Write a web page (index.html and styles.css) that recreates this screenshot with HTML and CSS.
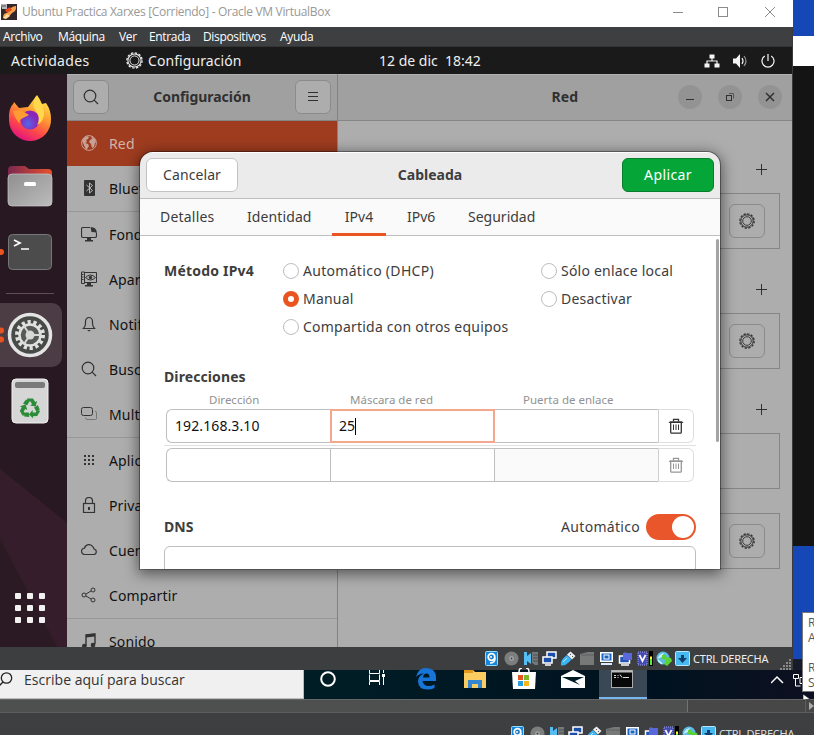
FILE: index.html
```html
<!DOCTYPE html>
<html lang="es">
<head>
<meta charset="utf-8">
<title>Ubuntu Practica Xarxes</title>
<link rel="stylesheet" href="styles.css">
</head>
<body>
<svg class="defs" width="0" height="0">
  <symbol id="gear" viewBox="0 0 16 16"><g fill="none" stroke="currentColor"><circle cx="8" cy="8" r="6.200" stroke-width="1"/><circle cx="8" cy="8" r="4.300" stroke-width=".9"/><circle cx="8" cy="8" r="7.200" stroke-width="1.200" stroke-dasharray="2.300 1.470"/></g></symbol>
  <symbol id="search" viewBox="0 0 16 16"><g fill="none" stroke="currentColor" stroke-width="1.2"><circle cx="7" cy="7" r="5.8"/><path d="M11.2 11.2L15 15"/></g></symbol>
  <symbol id="trash" viewBox="0 0 16 16"><path d="M2 3.200h12l1.500 1.800H.5z" fill="currentColor"/><path d="M5.500 3.200V1.300h5v1.900M2.700 5v9.200q0 1 1 1h8.600q1 0 1-1V5" fill="none" stroke="currentColor" stroke-width="1.300"/><path d="M5.500 6.500v5.500M8 6.500v5.500M10.500 6.500v5.500" stroke="currentColor"/></symbol>
  <symbol id="indicators" viewBox="0 0 205 16">
    <rect x="0.500" y="0.500" width="12" height="14" rx="1" fill="#1687db" stroke="#8fdcff"/><circle cx="6.500" cy="6" r="3.300" fill="#1b78c8" stroke="#fff" stroke-width="1.800"/><circle cx="6" cy="6" r="1" fill="#fff"/><path d="M10 7q0 5-5 5" fill="none" stroke="#fff" stroke-width="1.500"/>
    <circle cx="26.500" cy="7.500" r="7" fill="#7c7d7d"/><circle cx="26.500" cy="7.500" r="2.300" fill="#aaa"/><circle cx="26.500" cy="7.500" r="1" fill="#444"/>
    <path d="M39 1h3v4l4-3v11l-4-3v4h-3z" fill="#55bdf3"/><path d="M47 1h6v13h-3l-3-2z" fill="#747879"/><path d="M48 4h5M48 7h5M48 10h5" stroke="#4c5052"/>
    <g fill="#1d4daa" stroke="#fff" stroke-width="1.500"><rect x="62" y="1" width="9" height="6"/><rect x="58" y="6" width="9" height="6"/></g><path d="M60 14h6" stroke="#fff" stroke-width="1.500"/>
    <path d="M76 14.500q-.5-5 3-8l3-2.500 4.500 4.500-3 3q-3 3.500-7.500 3z" fill="#3ab4f4"/><path d="M82 3.500L85.500.5l5 4.500-3.500 3.500z" fill="#eee"/><path d="M85 3l1 1M87 5l1 1" stroke="#555"/><path d="M78 11l4-4" stroke="#bcecff"/>
    <path d="M95 3l8-2h6v13H95z" fill="#777878"/><path d="M96 4h13" stroke="#606161"/>
    <rect x="115" y="1" width="13" height="10" fill="#fff"/><rect x="116.500" y="2.500" width="10" height="7" fill="#1a64c2"/><rect x="119" y="4" width="5" height="4" fill="none" stroke="#fff"/><path d="M116 13h11" stroke="#d9eaff" stroke-width="2"/>
    <rect x="134.500" y="5" width="10" height="7" fill="#2355b7" stroke="#fff" stroke-width="1.500"/><path d="M138 2l3-1v1h6v7h-9z" fill="#5969d9"/><path d="M136 14h8" stroke="#fff" stroke-width="1.500"/>
    <rect x="153" y="1" width="9" height="13" fill="#434bb2" stroke="#9c9df0" stroke-dasharray="1 1"/><path d="M154.500 4l3 6 3-6" fill="none" stroke="#fff" stroke-width="1.700"/>
    <rect x="164" y="0" width="4" height="15" fill="#000"/><path d="M166 14V8" stroke="#51f12b" stroke-width="2"/><path d="M166 8V5.500" stroke="#ff3" stroke-width="2"/>
    <circle cx="178" cy="7" r="6.500" fill="#5bbce4"/><path d="M172 8q3-6 7-6l-2 4z" fill="#c5eefc"/><path d="M177 4q5-1 4 2l5 1 1 3-5 5-3-2 2-4-4-1z" fill="#5bd236"/><path d="M173 9l4 4" stroke="#d7f7ff" stroke-width="1.500"/>
    <rect x="190.500" y="0.500" width="14" height="14" rx="1" fill="#48b8f0" stroke="#b5e7ff"/><path d="M196 4h3v3h3l-4.500 5L193 7h3z" fill="#103e68"/>
  </symbol>
</svg>

<div class="screen">
  <div class="upper">
    <section class="vm">
      <header class="titlebar">
        <svg width="16" height="16" viewBox="0 0 16 16"><rect width="16" height="16" fill="#35262a"/><path d="M2 14q0-5 4-5 4-7 9-7 1 5-4 7-5 7-9 5z" fill="#f4a24e"/><path d="M4 6l5-3 2 3-5 3z" fill="#e6471c"/><path d="M6 10l3 2-4 3-3-1z" fill="#ffd99b"/><path d="M0 0h6v5H1z" fill="#bbb8bd"/><path d="M1 2h4" stroke="#555"/></svg>
        <span class="win-title">Ubuntu Practica Xarxes [Corriendo] - Oracle VM VirtualBox</span>
        <svg class="win-buttons" width="104" height="12" viewBox="0 0 104 12" fill="none" stroke="#8b8b8b"><path d="M1 6.500h10M93 1l10 10M103 1L93 11"/><rect x="46.500" y="1.500" width="9" height="9"/></svg>
      </header>
      <nav class="menubar"><span class="m1">Archivo</span><span class="m2">Máquina</span><span class="m3">Ver</span><span class="m4">Entrada</span><span class="m5">Dispositivos</span><span class="m6">Ayuda</span></nav>
      <div class="panel">
        <span class="activities">Actividades</span>
        <svg class="panel-gear" width="17" height="17"><use href="#gear"/></svg><span class="appname">Configuración</span>
        <span class="clock">12 de dic&nbsp; 18:42</span>
        <svg class="tray" width="72" height="16" viewBox="0 0 72 16"><g fill="#f4f4f4"><rect x="5.500" y="1.500" width="5" height="4"/><rect x="0.500" y="10.500" width="5" height="4"/><rect x="10.500" y="10.500" width="5" height="4"/><path d="M29 5.500h3L36 1v14l-4-4.500h-3z"/></g><g fill="none" stroke="#f4f4f4" stroke-width="1.200"><path d="M8 5v3M3 11V8h10v3M38 5q2 3 0 6"/><path d="M40 3q4 5 0 10" stroke="#999"/><path d="M60.800 3a6 6 0 1 0 6.400 0M64 1v7"/></g></svg>
      </div>

      <div class="desktop">
        <aside class="dock">
          <svg class="dock-art" width="67" height="573" viewBox="0 0 67 573">
            <defs>
              <linearGradient id="ff" x1="0.800" y1="0" x2="0.300" y2="1"><stop offset="0" stop-color="#fff04c"/><stop offset=".4" stop-color="#ff9b32"/><stop offset=".7" stop-color="#ff4a48"/><stop offset="1" stop-color="#e01083"/></linearGradient>
              <linearGradient id="fold" x1="0" y1="0" x2="1" y2="0"><stop offset="0" stop-color="#7b2850"/><stop offset="1" stop-color="#e8522c"/></linearGradient>
              <linearGradient id="grey" x1="0" y1="0" x2="1" y2="1"><stop offset="0" stop-color="#8f8f8f"/><stop offset="1" stop-color="#bcbcbc"/></linearGradient>
              <radialGradient id="globe" cx=".4" cy=".7"><stop offset="0" stop-color="#5568e8"/><stop offset="1" stop-color="#8a25ba"/></radialGradient>
              <path id="arrow" d="M27 324.500h6l2.200 3.500 1.800-1-1.300 5.500-5.700-1 2-1.300-1.500-2.700h-3zM26 325.500l3.500 2-2.500 4-4-2z"/>
            </defs>
            <path d="M0 395L67 449V573H0z" fill="#37202e" opacity=".7"/><path d="M0 465l57 108H0z" fill="#291a23" opacity=".8"/><path d="M15 490L0 455V395l67 54v140z" fill="#3d2030" opacity=".35"/>
            <g transform="translate(0 4)"><path d="M11 33l3-8 5 6 9-1 9-12q3 4 5 9l4-1q5 7 5 16a21 21 0 0 1-42 2q-1-13 5-18z" transform="translate(0 -1)" fill="url(#ff)"/><circle cx="30" cy="42" r="9.500" fill="url(#globe)"/><path d="M13 33l8-1 8 5-6 3q-5 2-3 6-5-5-7-13z" fill="#ff9c31"/><path d="M36 18q-5 10 0 15 5 7 1 14 6-3 7-10 1-9-8-19z" fill="#ffd84b"/></g>
            <path d="M8 96q0-4 4-4h13l4 3h19q4 0 4 4v12H8z" fill="url(#fold)"/><rect x="8" y="100" width="44" height="32" rx="4" fill="url(#grey)" stroke="#c9c9c9" stroke-width=".7"/><rect x="24" y="108" width="12" height="4" rx="1.500" fill="#fff"/>
            <rect x="8.500" y="160.500" width="43" height="35" rx="4" fill="#4b4c4b" stroke="#777"/><path d="M14 166l6 3-6 3M21 175h8" fill="none" stroke="#fff" stroke-width="1.700"/>
            <circle cx="1" cy="178" r="3" fill="#e95420"/><path d="M6 219.500h48" stroke="#604f59"/>
            <rect x="-10" y="229" width="72" height="64" rx="10" fill="#4c3d45"/><circle cx="1" cy="256.500" r="3" fill="#e95420"/><circle cx="1" cy="265.500" r="3" fill="#e95420"/>
            <circle cx="30" cy="261" r="20.500" fill="#484a48" stroke="#e4e4e4" stroke-width="3.500"/><circle cx="30" cy="261" r="13" fill="none" stroke="#e0e0e0" stroke-width="4" stroke-dasharray="3.200 2.640"/><circle cx="30" cy="261" r="10.500" fill="#575957" stroke="#e0e0e0" stroke-width="2.500"/><circle cx="30" cy="261" r="4.500" fill="#d7d7d7"/><path d="M30 261h11M30 261l-6-9M30 261l-6 9" stroke="#d7d7d7" stroke-width="2"/>
            <rect x="12" y="305" width="36" height="44" rx="4" fill="#d6d6d6" stroke="#f2f2f2"/><rect x="15" y="308" width="30" height="6" rx="2" fill="#7a7a7a"/>
            <g fill="#2c8b36"><use href="#arrow"/><use href="#arrow" transform="rotate(120 30 334.500)"/><use href="#arrow" transform="rotate(240 30 334.500)"/></g>
            <g fill="#f2f2f2"><rect x="15" y="519" width="6" height="6" rx="1"/><rect x="27" y="519" width="6" height="6" rx="1"/><rect x="39" y="519" width="6" height="6" rx="1"/><rect x="15" y="531" width="6" height="6" rx="1"/><rect x="27" y="531" width="6" height="6" rx="1"/><rect x="39" y="531" width="6" height="6" rx="1"/><rect x="15" y="543" width="6" height="6" rx="1"/><rect x="27" y="543" width="6" height="6" rx="1"/><rect x="39" y="543" width="6" height="6" rx="1"/></g>
          </svg>
        </aside>

        <div class="sidebar">
          <div class="side-head"><span class="tool"><svg width="16" height="16"><use href="#search"/></svg></span><b class="h-conf">Configuración</b><span class="tool"><svg width="16" height="16" viewBox="0 0 16 16"><path d="M3 3.500h10M3 7.500h10M3 11.500h10" stroke="#303030"/></svg></span></div>
          <div class="row selected"><svg width="16" height="16" viewBox="0 0 16 16"><circle cx="8" cy="8" r="7.400" fill="none" stroke="#c9a093"/><path d="M1 6l2-3 3-2 2 1-1 2-2 1 1 2-2 1 3 1 1 2-2 3-1 1-2-5zM10 1l4 3 1 3-1 1-1 4-2 1-1-4-2-2 1-2 2-1z" fill="#c9a093"/></svg><span>Red</span></div>
          <div class="row line"><svg width="16" height="16" viewBox="0 0 16 16"><rect x="3" width="11" height="16" rx="1" fill="#333"/><path d="M5.500 5l6 5.500-3 2.500V3l3 2.500-6 5.500" fill="none" stroke="#bbb"/></svg><span>Bluetooth</span></div>
          <div class="row"><svg width="16" height="16" viewBox="0 0 16 16"><path d="M9 1.500H2q-1.500 0-1.500 1.500v7q0 1.500 1.500 1.500h12q1.500 0 1.500-1.500V7" fill="none" stroke="#333" stroke-width="1.200"/><path d="M9.500 1q6 0 6.500 6-2-1-5.500-1zM6 12h4v2h2v1.500H4V14h2z" fill="#333"/></svg><span>Fondo</span></div>
          <div class="row"><svg width="16" height="16" viewBox="0 0 16 16"><path d="M4 1.500h11.500v10H4M.5 1v11.500h3V1zM.5 3.500h2M.5 6h2M.5 8.500h2" fill="none" stroke="#333"/><path d="M4.500 6.500q5-5 10 0-5 5-10 0z" fill="none" stroke="#333"/><circle cx="9.500" cy="6.500" r="1.700" fill="#333"/><path d="M6 12h4v2h2v1.500H4V14h2z" fill="#333"/></svg><span>Apariencia</span></div>
          <div class="row"><svg width="16" height="16" viewBox="0 0 16 16"><path d="M2.500 12.500q2-2 2-5v-2a3.500 4 0 0 1 7 0v2q0 3 2 5z" fill="none" stroke="#333" stroke-width="1.200"/><path d="M6 14h4l-2 1.500z" fill="#333"/></svg><span>Notificaciones</span></div>
          <div class="row"><svg width="16" height="16"><use href="#search"/></svg><span>Buscar</span></div>
          <div class="row line"><svg width="16" height="16" viewBox="0 0 16 16" fill="none" stroke="#333"><rect x=".5" y="1.500" width="11" height="8" rx="2"/><path d="M14 5.500h1q.5 0 .5 1v6q0 1-1 1H6q-1.500 0-1.500-2" stroke="#777"/></svg><span>Multitarea</span></div>
          <div class="row"><svg width="16" height="16" viewBox="0 0 16 16" stroke="#333" stroke-width="2" stroke-dasharray="2 2"><path d="M3 4h10M3 8h10M3 12h10"/></svg><span>Aplicaciones</span></div>
          <div class="row"><svg width="16" height="16" viewBox="0 0 16 16" fill="none" stroke="#333" stroke-width="1.200"><rect x="2.500" y="6.500" width="11" height="9"/><path d="M4.500 6V4a3.500 3.500 0 0 1 7 0v2"/><path d="M8 10v3" stroke-width="2"/></svg><span>Privacidad</span></div>
          <div class="row"><svg width="16" height="16" viewBox="0 0 16 16"><path d="M4 12.500a3.200 3.200 0 0 1-.5-6.400A4.600 4.600 0 0 1 12 5q1 1 1 2a2.800 2.800 0 0 1 0 5.500z" fill="none" stroke="#333" stroke-width="1.200"/></svg><span>Cuentas en línea</span></div>
          <div class="row line"><svg width="16" height="16" viewBox="0 0 16 16" fill="none" stroke="#333"><circle cx="3" cy="8" r="2"/><circle cx="12" cy="3" r="2"/><circle cx="12" cy="13" r="2"/><path d="M5 7l5-3M5 9l5 3"/></svg><span>Compartir</span></div>
          <div class="row"><svg width="16" height="16" viewBox="0 0 16 16"><path d="M5 13V2l9-1v10" fill="none" stroke="#333" stroke-width="1.400"/><path d="M5 1.500l9-1v3l-9 1z" fill="#333"/><circle cx="3.300" cy="13" r="2.300" fill="#333"/><circle cx="12" cy="12" r="2.300" fill="#333"/></svg><span>Sonido</span></div>
        </div>

        <main class="network">
          <div class="net-head"><b class="h-red">Red</b><div class="round-buttons"><i><svg width="24" height="24" viewBox="0 0 24 24"><path d="M8 14.500h8" stroke="#303030"/></svg></i><i><svg width="24" height="24" viewBox="0 0 24 24" fill="none" stroke="#303030"><rect x="8.500" y="10.500" width="5" height="5"/><path d="M11 8.500h4.500v5" stroke="#555"/></svg></i><i><svg width="24" height="24" viewBox="0 0 24 24"><path d="M8 8l8 8M16 8l-8 8" stroke="#303030" stroke-width="1.500"/></svg></i></div></div>
          <div class="cards">
            <div class="plus"></div>
            <div class="card"><span class="tool"><svg width="16" height="16"><use href="#gear"/></svg></span></div>
            <div class="plus"></div>
            <div class="card"><span class="tool"><svg width="16" height="16"><use href="#gear"/></svg></span></div>
            <div class="plus"></div>
            <div class="card"></div>
            <div class="card last"><span class="tool"><svg width="16" height="16"><use href="#gear"/></svg></span></div>
          </div>
        </main>

        <div class="dialog">
          <div class="dlg-head"><button class="cancel"><span>Cancelar</span></button><b>Cableada</b><button class="apply"><span>Aplicar</span></button></div>
          <div class="tabs"><span class="t1">Detalles</span><span class="t2">Identidad</span><span class="t3 on">IPv4</span><span class="t4">IPv6</span><span class="t5">Seguridad</span></div>
          <div class="dlg-body">
            <div class="method"><b>Método IPv4</b>
              <div class="options">
                <label><i></i><span class="o1">Automático (DHCP)</span></label><label><i></i><span class="o2">Sólo enlace local</span></label>
                <label><i class="checked"></i><span class="o3">Manual</span></label><label><i></i><span class="o4">Desactivar</span></label>
                <label><i></i><span class="o5">Compartida con otros equipos</span></label>
              </div>
            </div>
            <b class="h-dir">Direcciones</b>
            <div class="labels"><span class="l1">Dirección</span><span class="l2">Máscara de red</span><span class="l3">Puerta de enlace</span></div>
            <div class="entry"><div class="f first">192.168.3.10</div><div class="f focus">25<i class="caret"></i></div><div class="f"></div><div class="del"><svg width="16" height="16"><use href="#trash"/></svg></div></div>
            <div class="sep"></div>
            <div class="entry"><div class="f first"></div><div class="f"></div><div class="f off"></div><div class="del off-icon"><svg width="16" height="16"><use href="#trash"/></svg></div></div>
            <div class="dns"><b>DNS</b><span>Automático</span><div class="switch"><i></i></div></div>
            <div class="dns-box"></div>
          </div>
          <div class="scroll-thumb"></div>
        </div>
      </div>

      <footer class="statusbar"><svg width="205" height="16"><use href="#indicators"/></svg><span>CTRL DERECHA</span><svg class="grip" width="12" height="12" viewBox="0 0 12 12" stroke="#898989" stroke-width="2" stroke-dasharray="2 1"><path d="M9 2h2M6 5h5M3 8h8M0 11h11"/></svg></footer>
    </section>
    <div class="strip"><div class="blue top"></div><div class="white"></div><div class="black"></div><div class="blue"></div><div class="night"></div></div>
  </div>

  <div class="taskbar">
    <div class="searchbox"><svg width="14" height="16" viewBox="0 0 14 16" fill="none" stroke="#222" stroke-width="1.300"><circle cx="6.500" cy="6" r="5.200"/><path d="M3 10l-4 4"/></svg><span>Escribe aquí para buscar</span></div>
    <div class="cell"><svg width="18" height="18" viewBox="0 0 18 18"><circle cx="9" cy="9" r="6.800" fill="none" stroke="#fff" stroke-width="2"/></svg></div>
    <div class="cell"><svg width="18" height="18" viewBox="0 0 18 18" fill="none" stroke="#fff" stroke-width="1"><path d="M1.500 0v3.500h10V0M1.500 15v-3.500h10V15M15.500 0v3M15.500 7v8"/><path d="M1.500 4.500v6h10v-6"/><rect x="14.500" y="4.500" width="2" height="2" fill="#fff"/></svg></div>
    <div class="cell"><svg width="20" height="22" viewBox="0 0 20 22"><path d="M0 9Q2 0 10 0q10 0 10 10v3H6.500q1 5 6 5 3 0 6-1.500V20q-3 1.500-7 1.500-9 0-9.500-8Q2 8 8 5.500 3 5.500 0 9zM7 9.500h6.500q0-4-3-4T7 9.500z" fill="#1875d8"/></svg></div>
    <div class="cell"><svg width="22" height="18" viewBox="0 0 22 18"><path d="M0 0h9l2 2h11v16H0z" fill="#f9cd62"/><path d="M0 0h9v3H0z" fill="#e39a1c"/><path d="M4 18v-8h14v8h-4v-4H8v4z" fill="#3586d0"/></svg></div>
    <div class="cell"><svg width="24" height="22" viewBox="0 0 24 22"><path d="M0 4h24l-1 17H1z" fill="#fff"/><path d="M7 4Q7 0 10 0M17 4q0-4-3-4" fill="none" stroke="#fff" stroke-width="1.500"/><path d="M6 7h5v5H6z" fill="#e65424"/><path d="M12 7h5v5h-5z" fill="#7cba29"/><path d="M6 13h5v5H6z" fill="#25a0dc"/><path d="M12 13h5v5h-5z" fill="#f6b619"/></svg></div>
    <div class="cell"><svg width="24" height="19" viewBox="0 0 24 19"><path d="M0 6L12 0l12 6v12H0z" fill="#fff"/><path d="M1 7h22l-9 4 5 4z" fill="#001923"/></svg></div>
    <div class="cell active"><svg width="22" height="18" viewBox="0 0 22 18"><rect x=".5" y=".5" width="21" height="17" fill="#080808" stroke="#aaa"/><path d="M1 1.500h20" stroke="#bbb" stroke-width="2"/><path d="M3 5.500h2M3 7.500h2M7 5v1M7 7v1M9 4.500l2 3M12 7.500h6" stroke="#ddd"/></svg></div>
    <svg class="system" width="43" height="29" viewBox="0 0 43 29" fill="none" stroke="#fff"><path d="M0 13l6-6 6 6" stroke-width="1.500"/><path d="M22.500 4.500h5v4h-5zM24.500 9v7h5M29 7.500h10v6H29z"/></svg>
  </div>
  <div class="hscroll"><div class="thumb"></div><div class="track"></div><svg class="arrow" width="9" height="12" viewBox="0 0 9 12"><path d="M.5 0v12" stroke="#5d5d5d"/><path d="M4 2l5 4-5 4z" fill="#aaa"/></svg></div>
  <footer class="statusbar outer"><svg width="205" height="16"><use href="#indicators"/></svg><span>CTRL DERECHA</span></footer>

  <div class="tooltip"><span>R</span><span>A</span><span class="gap">R</span><span>S</span></div>
  <svg class="pointer" width="12" height="12" viewBox="0 0 12 12"><path d="M0 1v6l7-1z" fill="#fff" stroke="#111" stroke-width=".6"/></svg>
</div>
</body>
</html>
```
FILE: styles.css
```css
* { box-sizing: border-box; }
body { margin: 0; overflow: hidden; background: #3e3f41; font-family: "Noto Sans", "Open Sans", sans-serif; }
.defs { display: block; }
svg { display: block; flex: none; }
.screen { position: relative; width: 814px; height: 735px; overflow: hidden; display: flex; flex-direction: column; }
.upper { display: flex; height: 670px; flex: none; }
.vm { width: 793px; display: flex; flex-direction: column; flex: none; border-right: 1px solid #3a3a3a; }

.titlebar { height: 27px; background: #fff; display: flex; align-items: center; padding: 0 17px 4px 1px; margin-right: -1px; flex: none; }
.win-title { margin-left: 5px; font-family: "Open Sans", sans-serif; font-size: 12px; letter-spacing: -0.31px; color: #989898; white-space: nowrap; }
.win-buttons { margin-left: auto; }
.menubar { height: 20px; flex: none; background: #3e3f41; display: flex; align-items: center; padding-left: 3px; color: #fff; font: 12px "Open Sans", sans-serif; letter-spacing: -0.35px; border-bottom: 1px solid #333; }
.m1 { width: 55px; } .m2 { width: 61px; } .m3 { width: 30px; } .m4 { width: 54px; } .m5 { width: 77px; }
.panel { height: 27px; flex: none; background: #1a1a1a; display: flex; align-items: center; color: #eee; font-size: 14px; padding-left: 11px; white-space: nowrap; }
.activities { width: 115px; letter-spacing: 0.35px; }
.appname { margin-left: 5px; width: 231px; letter-spacing: 0.08px; }
.tray { margin-left: auto; margin-right: 16px; }
.clock { letter-spacing: 0; }

.desktop { position: relative; height: 573px; flex: none; display: flex; overflow: hidden; background: #adadad; }
.dock { width: 67px; background: #281821; flex: none; }
.sidebar { width: 271px; flex: none; border-right: 1px solid #828282; background: #adadad; font-size: 14px; color: #111; }
.side-head { height: 47px; display: flex; align-items: center; justify-content: space-between; padding: 0 6px 1px; background: #a0a0a0; border-top: 1px solid #b2b2b2; border-bottom: 1px solid #858585; color: #303030; }
.h-conf { letter-spacing: -0.05px; padding-bottom: 1px; }
.tool { width: 36px; height: 34px; border: 1px solid #8b8b8b; border-radius: 6px; background: #adadad; display: flex; align-items: center; justify-content: center; color: #303030; }
.row { height: 45px; display: flex; align-items: center; gap: 12px; padding: 0 0 1px 14px; color: #333; white-space: nowrap; letter-spacing: 0.15px; }
.row span { color: #111; padding-top: 1px; }
.row.line { height: 46px; border-bottom: 1px solid #979797; }
.row.selected { background: #9f3c20; }
.row.selected span { color: #d1b4a9; }
.network { flex: 1; }
.net-head { height: 47px; display: flex; justify-content: flex-end; align-items: center; padding-bottom: 1px; background: #a0a0a0; border-top: 1px solid #b2b2b2; border-bottom: 1px solid #858585; color: #303030; font-size: 14px; }
.h-red { margin-right: 100px; padding-bottom: 1px; }
.round-buttons { display: flex; gap: 16px; padding-right: 10px; }
.round-buttons i { width: 24px; height: 24px; border-radius: 50%; background: #939393; }
.cards { padding: 8px 12px 0 13px; }
.plus { height: 64px; padding: 35px 13px 0 0; display: flex; justify-content: flex-end; }
.plus::after { content: ""; width: 11px; height: 11px; background: linear-gradient(#303030, #303030) 5px 0 / 1px 11px no-repeat, linear-gradient(#303030, #303030) 0 5px / 11px 1px no-repeat; }
.card { height: 56px; border: 1px solid #858585; display: flex; justify-content: flex-end; align-items: center; padding-right: 14px; background: #adadad; }
.card.last { margin-top: 24px; }

.dialog { position: absolute; left: 140px; top: 78px; width: 580px; height: 418px; background: #fff; border-radius: 13px 13px 0 0; overflow: hidden; border-bottom: 1px solid #ccc; font-size: 14px; color: #3d3d3d; }
.desktop::after { content: ""; position: absolute; left: 140px; top: 78px; width: 580px; height: 417px; border-radius: 13px 13px 0 0; box-shadow: 0 0 0 1px rgba(0,0,0,.35), 0 3px 14px 2px rgba(0,0,0,.5); pointer-events: none; }
.dlg-head { height: 47px; display: flex; justify-content: space-between; align-items: center; padding: 0 6px 1px; background: #ebebeb; border-bottom: 1px solid #bdbdbd; border-top: 1px solid #fff; }
.dlg-head b { padding-bottom: 1px; }
.dlg-head button { width: 92px; height: 34px; border: 1px solid #c3c3c3; border-radius: 6px; background: #fff; font: inherit; color: inherit; padding: 0 0 1px; letter-spacing: 0.1px; }
.dlg-head .apply { background: #06a538; border-color: #087d2b; color: #fff; letter-spacing: 0.4px; }
.tabs { height: 37px; display: flex; background: #fafafa; border-bottom: 1px solid #bfbfbf; line-height: 35px; padding-left: 20px; white-space: nowrap; }
.t1 { width: 87px; letter-spacing: 0.2px; } .t2 { width: 85px; letter-spacing: 0.1px; }
.tabs .on { height: 37px; width: 54px; text-align: center; border-bottom: 3px solid #e95420; }
.t4 { width: 82px; padding-left: 21px; }
.dlg-body { height: 333px; padding: 21px 24px 0; }
.method { display: flex; }
.method > b { width: 119px; line-height: 28px; letter-spacing: 0.2px; }
.options { display: grid; grid-template-columns: 258px auto; grid-auto-rows: 28px; white-space: nowrap; letter-spacing: 0.22px; }
.options label { display: flex; align-items: center; gap: 4px; }
.options span { padding-bottom: 1px; }
.options .o1 { letter-spacing: 0.3px; }
.options i { width: 16px; height: 16px; border: 1px solid #bdbdbd; border-radius: 50%; background: #fff; }
.options .checked { border: 5px solid #e95420; }
.h-dir { display: block; margin-top: 24px; line-height: 24px; height: 27px; letter-spacing: 0.1px; }
.labels { display: flex; height: 17px; font-size: 11.5px; line-height: 16px; color: #929292; padding-left: 45px; white-space: nowrap; }
.l1 { width: 141px; } .l2 { width: 173px; }
.entry { display: flex; width: 528px; height: 34px; margin-left: 2px; color: #111; }
.f { width: 164px; border: 1px solid #bfbfbf; border-right-width: 0; line-height: 32px; padding-left: 8px; display: flex; align-items: center; letter-spacing: 0.1px; }
.f.first { border-radius: 6px 0 0 6px; }
.f.focus { border: 2px solid #f5a78d; width: 165px; margin-right: -1px; position: relative; padding-left: 7px; }
.caret { width: 1px; height: 17px; background: #000; }
.f.off { background: #fafafa; }
.del { width: 36px; border: 1px solid #dedede; border-left-color: #cfcfcf; border-radius: 0 6px 6px 0; display: flex; align-items: center; justify-content: center; color: #333; }
.del svg { margin-right: 1px; }
.del.off-icon { color: #979797; }
.sep { height: 1px; background: #e1e1e1; margin: 2px 0; }
.dns { display: flex; align-items: center; height: 26px; margin-top: 32px; }
.dns b, .dns span { padding-bottom: 1px; }
.dns span { margin-left: auto; margin-right: 6px; letter-spacing: 0.3px; }
.switch { width: 50px; height: 26px; border-radius: 13px; background: #e9562b; padding: 2px; display: flex; justify-content: flex-end; }
.switch i { width: 22px; height: 22px; background: #fff; border-radius: 50%; }
.dns-box { height: 60px; margin-top: 6px; border: 1px solid #bfbfbf; border-radius: 6px; }
.scroll-thumb { position: absolute; right: 1px; top: 87px; width: 3px; height: 203px; border-radius: 2px; background: #a4a4a4; }

.statusbar { height: 23px; flex: none; background: #3d3e40; display: flex; align-items: center; padding-left: 485px; color: #eee; font-size: 11px; letter-spacing: -0.2px; white-space: nowrap; }
.statusbar span { margin-left: 3px; }
.grip { margin-left: auto; margin-top: 10px; }
.strip { width: 21px; display: flex; flex-direction: column; }
.blue { height: 113px; background: #1647b7; }
.blue.top { height: 36px; }
.white { height: 30px; background: #fff; }
.black { height: 480px; background: #141414; }
.night { height: 11px; background: #171c2b; }

.taskbar { height: 29px; flex: none; display: flex; background: linear-gradient(90deg, #001d26 40%, #00121f 80%, #0e1020); }
.searchbox { width: 304px; background: #f0f0f0; border: solid #bbb; border-width: 0 1px 1px 0; display: flex; align-items: center; padding-bottom: 9px; color: #333; font: 14px "Open Sans", sans-serif; letter-spacing: 0.03px; }
.searchbox span { margin-left: 10px; }
.cell { width: 49px; display: flex; justify-content: center; padding: 0 2px 0 0; }
.cell:nth-child(4) svg, .cell:nth-child(6) svg { margin-top: -2px; }
.active { width: 48px; margin-left: 1px; background: #3a4856; border-bottom: 2px solid #78b6ed; }
.system { margin-left: 124px; }
.hscroll { height: 14px; flex: none; display: flex; background: #474747; border-top: 1px solid #666; border-bottom: 1px solid #5c5c5c; }
.thumb { width: 688px; background: #4e504f; border-right: 1px solid #737373; }
.track { width: 117px; }
.outer { height: 24px; margin-top: 10px; align-items: flex-start; padding-top: 3px; padding-left: 511px; color: #ddd; background: #3e3f41; }
.tooltip { position: absolute; left: 802px; top: 612px; width: 30px; height: 80px; background: #fff; border: 1px solid #777; display: flex; flex-direction: column; padding: 2px 0 0 5px; font: 12px/15px "Open Sans", sans-serif; color: #575757; }
.tooltip .gap { margin-top: 15px; }
.pointer { position: absolute; left: 803px; top: 693px; }
```
